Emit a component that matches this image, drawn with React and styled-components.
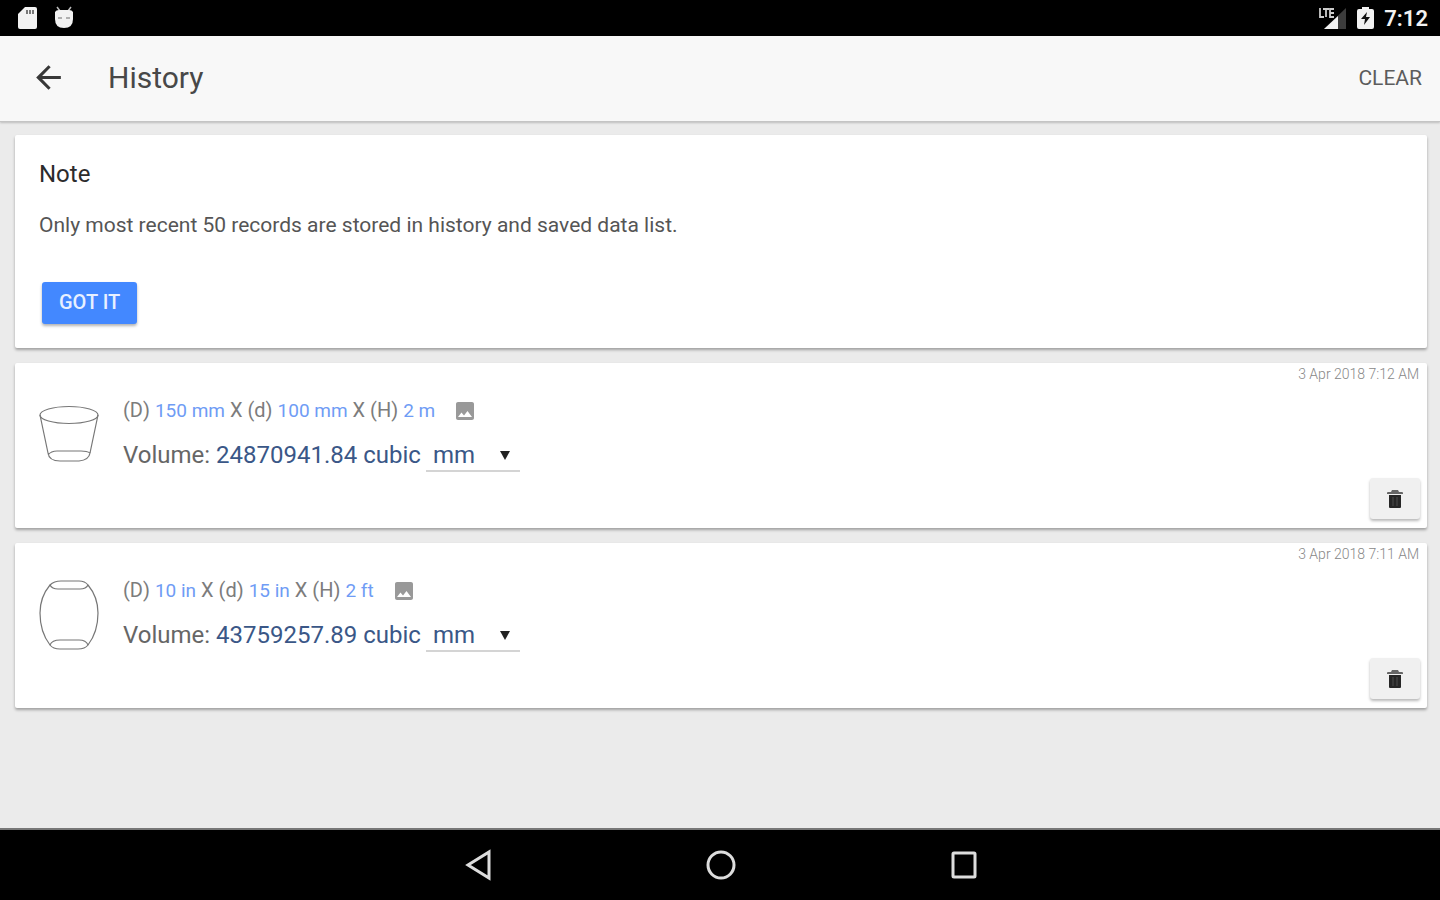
import React, { useState } from "react";
import styled, { createGlobalStyle } from "styled-components";
import { MdArrowBack, MdImage } from "react-icons/md";

const BLUE = "#4388ff";
const LINK = "#6f9cf5";
const NAVY = "#3a5787";

const GlobalStyle = createGlobalStyle`
  * {
    box-sizing: border-box;
  }

  body {
    margin: 0;
    font-family: Roboto, sans-serif;
    background: #ebebeb;
  }

  button,
  select {
    font-family: inherit;
  }
`;

const Screen = styled.div`
  min-height: 100vh;
  display: flex;
  flex-direction: column;
`;

/* --- system bars --- */

const StatusBar = styled.div`
  height: 36px;
  padding: 0 12px 0 18px;
  display: flex;
  align-items: center;
  justify-content: space-between;
  background: #000;
  color: #f2f2f2;
`;

const StatusGroup = styled.div`
  display: flex;
  align-items: center;
  gap: ${(p) => p.$gap}px;
`;

const Clock = styled.span`
  padding-top: 2px;
  font-size: 22px;
  line-height: 28px;
  font-weight: 600;
`;

const NavBar = styled.nav`
  height: 72px;
  padding-left: 1px;
  border-top: 2px solid #777;
  display: flex;
  align-items: center;
  justify-content: center;
  gap: 203px;
  background: #000;
`;

const NavButton = styled.button`
  width: 40px;
  height: 40px;
  padding: 0;
  border: 0;
  background: none;
  display: grid;
  place-items: center;
`;

/* --- app bar --- */

const AppBar = styled.header`
  height: 86px;
  padding: 0 18px 2px 30px;
  display: flex;
  align-items: center;
  background: #f8f8f8;
  border-bottom: 1px solid #c4c4c4;
  box-shadow: 0 1px 2px rgba(0, 0, 0, 0.2);
`;

const BackButton = styled.button`
  padding: 0;
  border: 0;
  background: none;
  color: #383838;
  display: flex;
`;

const Title = styled.h1`
  flex: 1;
  margin: 0 0 0 41px;
  font-size: 30px;
  line-height: 40px;
  font-weight: 400;
  color: #484848;
`;

const ClearButton = styled.button`
  padding: 0;
  border: 0;
  background: none;
  font-size: 21px;
  line-height: 28px;
  color: #5c5c5c;
`;

/* --- cards --- */

const Content = styled.main`
  flex: 1;
  padding: 13px 13px 13px 15px;
  display: flex;
  flex-direction: column;
  gap: 15px;
`;

const Card = styled.section`
  background: #fff;
  border-radius: 2px;
  box-shadow: 0 2px 3px rgba(0, 0, 0, 0.32);
`;

const NoteCard = styled(Card)`
  padding: 24px;
`;

const NoteTitle = styled.h2`
  margin: 0;
  font-size: 24px;
  line-height: 30px;
  font-weight: 400;
  color: #2c2c2c;
`;

const NoteText = styled.p`
  margin: 21px 0 42px;
  font-size: 21px;
  line-height: 30px;
  color: #555;
`;

const GotItButton = styled.button`
  display: block;
  height: 42px;
  margin-left: 3px;
  padding: 0 17px 2px;
  border: 0;
  border-radius: 3px;
  background: ${BLUE};
  box-shadow: 0 2px 3px rgba(0, 0, 0, 0.3);
  color: #e8f0ff;
  font-size: 20px;
  font-weight: 500;
`;

const RecordCard = styled(Card)`
  height: 165px;
  padding: 0 7px 9px 24px;
  display: grid;
  grid-template-columns: 60px 1fr auto;
  column-gap: 24px;
`;

const Shape = styled.div`
  padding-top: ${(p) => p.$top}px;
`;

const Details = styled.div`
  padding-top: 32px;
`;

const Dimensions = styled.div`
  display: flex;
  align-items: center;
  gap: 18px;
  font-size: 20px;
  line-height: 30px;
  color: #7c7c7c;

  b {
    font-size: 19px;
    font-weight: 400;
    color: ${LINK};
  }

  svg {
    color: #999;
  }
`;

const Volume = styled.div`
  margin-top: 12px;
  display: flex;
  align-items: flex-start;
  gap: 5px;
  font-size: 24px;
  line-height: 34px;
  color: #666;

  b {
    font-weight: 400;
    color: ${NAVY};
  }
`;

const UnitField = styled.div`
  position: relative;
  width: 94px;
  border-bottom: 2px solid #d4d4d4;
`;

const UnitSelect = styled.select`
  display: block;
  width: 100%;
  height: 32px;
  padding: 2px 7px 0;
  border: 0;
  background: none;
  appearance: none;
  font-size: 24px;
  color: ${NAVY};
`;

const Caret = styled.svg`
  position: absolute;
  right: 10px;
  top: 13px;
  pointer-events: none;
`;

const Side = styled.div`
  display: flex;
  flex-direction: column;
  align-items: flex-end;
  justify-content: space-between;
`;

const Stamp = styled.time`
  padding: 2px 1px 0 0;
  font-size: 14px;
  line-height: 18px;
  font-weight: 300;
  color: #888;
`;

const DeleteButton = styled.button`
  width: 50px;
  height: 41px;
  padding: 0;
  border: 0;
  border-radius: 3px;
  background: #f0f0f0;
  box-shadow: 0 2px 3px rgba(0, 0, 0, 0.28);
  display: grid;
  place-items: center;
`;

function Trash() {
  return (
    <svg width="16" height="20" viewBox="0 0 16 20">
      <path d="M0 4 Q0 3 1 3 H4 L5 1 H11 L12 3 H15 Q16 3 16 4 V5 H0 Z" fill="#666" />
      <path d="M2 6 H14 V18 Q14 19 13 19 H3 Q2 19 2 18 Z" fill="#262626" />
      <path d="M6 8 V17 M10 8 V17" stroke="#4c4c4c" strokeWidth="1" />
    </svg>
  );
}

/* tapered bucket */
function Frustum() {
  return (
    <svg width="60" height="58" viewBox="0 0 60 58" fill="none" stroke="#777" strokeWidth="1.2">
      <ellipse cx="30" cy="10" rx="29" ry="8.5" />
      <path d="M1 10 L9 48 M59 10 L51 48" />
      <path d="M9 48 Q10 56 21 56 H40 Q50 55 51 48 Q48 46 42 46 H18 Q12 46 9 50" />
    </svg>
  );
}

/* barrel with flat ends */
function Barrel() {
  return (
    <svg width="60" height="70" viewBox="0 0 60 70" fill="none" stroke="#777" strokeWidth="1.2">
      <path d="M11 5 Q1 17 1 33 Q1 52 11 65 M49 5 Q59 17 59 33 Q59 52 49 65" />
      <path d="M11 5 Q15 1 22 1 H40 Q46 1 49 5 Q47 9 41 9 H19 Q13 9 11 5 Z" />
      <path d="M11 65 Q13 60 21 60 H40 Q47 60 49 65 Q46 69 39 69 H21 Q14 69 11 65 Z" />
    </svg>
  );
}

const records = [
  {
    id: 1,
    shape: <Frustum />,
    top: 42,
    dims: [["D", "150 mm"], ["d", "100 mm"], ["H", "2 m"]],
    volume: "24870941.84",
    date: "3 Apr 2018 7:12 AM",
  },
  {
    id: 2,
    shape: <Barrel />,
    top: 37,
    dims: [["D", "10 in"], ["d", "15 in"], ["H", "2 ft"]],
    volume: "43759257.89",
    date: "3 Apr 2018 7:11 AM",
  },
];

function Record({ record }) {
  const [unit, setUnit] = useState("mm");

  return (
    <RecordCard>
      <Shape $top={record.top}>{record.shape}</Shape>
      <Details>
        <Dimensions>
          <span>
            {record.dims.map(([name, value], i) => (
              <React.Fragment key={name}>
                {i > 0 && " X "}({name}) <b>{value}</b>
              </React.Fragment>
            ))}
          </span>
          <MdImage size={24} />
        </Dimensions>
        <Volume>
          <label htmlFor={`unit-${record.id}`}>
            Volume: <b>{record.volume} cubic</b>
          </label>
          <UnitField>
            <UnitSelect
              id={`unit-${record.id}`}
              value={unit}
              onChange={(e) => setUnit(e.target.value)}
            >
              <option>mm</option>
              <option>cm</option>
              <option>m</option>
              <option>in</option>
              <option>ft</option>
            </UnitSelect>
            <Caret width="10" height="9" viewBox="0 0 10 9">
              <path d="M0 0 H10 L5 9 Z" fill="#222" />
            </Caret>
          </UnitField>
        </Volume>
      </Details>
      <Side>
        <Stamp>{record.date}</Stamp>
        <DeleteButton aria-label="Delete">
          <Trash />
        </DeleteButton>
      </Side>
    </RecordCard>
  );
}

export default function App() {
  return (
    <Screen>
      <GlobalStyle />

      <StatusBar>
        <StatusGroup $gap={16}>
          {/* sd card */}
          <svg width="20" height="24" viewBox="0 0 20 24">
            <path d="M7 1 H17 Q19 1 19 3 V21 Q19 23 17 23 H2 Q0 23 0 21 V8 Z" fill="#f2f2f2" />
            <path d="M9 4 V8 M12 4 V8 M15 4 V8" stroke="#777" strokeWidth="2" />
          </svg>
          {/* android head */}
          <svg width="20" height="24" viewBox="0 0 20 24">
            <path d="M3 1 L6 5 M17 1 L14 5" stroke="#bbb" strokeWidth="1.5" />
            <path d="M1 6 Q2 4 5 4 H15 Q18 4 19 6 V13 Q19 22 10 22 Q1 22 1 13 Z" fill="#f2f2f2" />
            <path d="M4 12 H8 M12 12 H16" stroke="#999" strokeWidth="1.5" />
          </svg>
        </StatusGroup>
        <StatusGroup $gap={10}>
          {/* LTE signal */}
          <svg width="29" height="24" viewBox="0 0 29 24">
            <path d="M28 2 V23 H6 Z" fill="#3c3c3c" />
            <path d="M20 10 V23 H6 Z" fill="#f2f2f2" />
            <path d="M2 2 V11 H6 M5 3 H11 M8 3 V11 M16 3 H12 V11 H16 M12 7 H16" fill="none" stroke="#ccc" strokeWidth="1.8" />
          </svg>
          {/* charging battery */}
          <svg width="17" height="24" viewBox="0 0 17 24">
            <path d="M5 1 H12 V3 H15 Q17 3 17 5 V21 Q17 23 15 23 H2 Q0 23 0 21 V5 Q0 3 2 3 H5 Z" fill="#f2f2f2" />
            <path d="M10 6 L4 13 H8 L7 19 L13 11 H9 Z" fill="#111" />
          </svg>
          <Clock>7:12</Clock>
        </StatusGroup>
      </StatusBar>

      <AppBar>
        <BackButton aria-label="Back">
          <MdArrowBack size={37} />
        </BackButton>
        <Title>History</Title>
        <ClearButton>CLEAR</ClearButton>
      </AppBar>

      <Content>
        <NoteCard>
          <NoteTitle>Note</NoteTitle>
          <NoteText>Only most recent 50 records are stored in history and saved data list.</NoteText>
          <GotItButton>GOT IT</GotItButton>
        </NoteCard>
        {records.map((r) => (
          <Record key={r.id} record={r} />
        ))}
      </Content>

      <NavBar>
        <NavButton aria-label="Back">
          <svg width="28" height="32" viewBox="0 0 28 32" fill="none" stroke="#ddd" strokeWidth="3">
            <path d="M25 3 V29 L4 16 Z" />
          </svg>
        </NavButton>
        <NavButton aria-label="Home">
          <svg width="32" height="32" viewBox="0 0 32 32" fill="none" stroke="#ddd" strokeWidth="3">
            <circle cx="16" cy="16" r="13" />
          </svg>
        </NavButton>
        <NavButton aria-label="Recents">
          <svg width="32" height="32" viewBox="0 0 32 32" fill="none" stroke="#ddd" strokeWidth="3">
            <rect x="5" y="4" width="22" height="24" rx="1" />
          </svg>
        </NavButton>
      </NavBar>
    </Screen>
  );
}
